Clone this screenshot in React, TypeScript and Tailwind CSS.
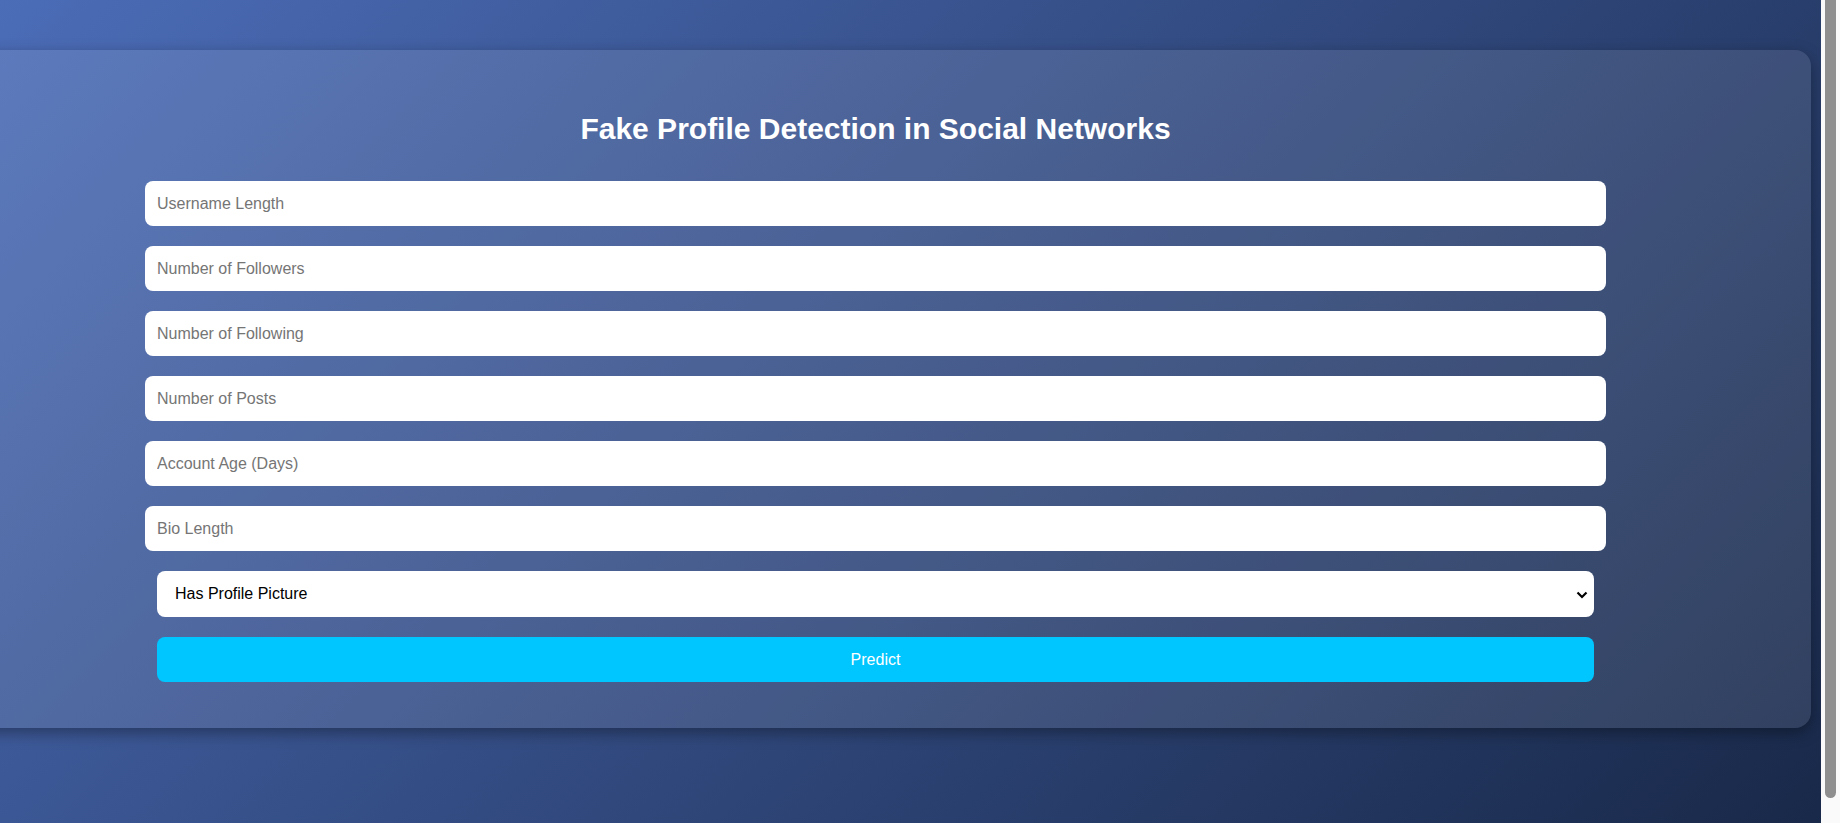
import React from "react";

const fields = [
  "Username Length",
  "Number of Followers",
  "Number of Following",
  "Number of Posts",
  "Account Age (Days)",
  "Bio Length",
];

export default function App() {
  return (
    <div className="flex h-[823px] w-full overflow-hidden font-['Liberation_Sans',Arial,sans-serif]">
      <div className="h-[849px] flex-1 overflow-hidden bg-[linear-gradient(135deg,#4b6cb7,#182848)] pt-[50px]">
        <div className="ml-[-60px] w-[1871px] rounded-[16px] bg-white/10 pt-[61px] pb-[46px] shadow-[0_5px_15px_rgba(0,0,0,0.35)]">
          <h2 className="text-center text-[30px] leading-[36px] font-bold text-white">
            Fake Profile Detection in Social Networks
          </h2>
          <form
            className="mt-[34px] flex flex-col gap-[20px] px-[205px]"
            onSubmit={(e) => e.preventDefault()}
          >
            {fields.map((f) => (
              <input
                key={f}
                type="text"
                placeholder={f}
                className="h-[45px] w-full rounded-[8px] bg-white px-[12px] text-[16px] text-black outline-none placeholder:text-[#757575]"
              />
            ))}
            <div className="relative mx-[12px]">
              <select
                defaultValue="1"
                className="h-[46px] w-full appearance-none rounded-[8px] bg-white pl-[18px] text-[16px] text-black outline-none"
              >
                <option value="1">Has Profile Picture</option>
                <option value="0">No Profile Picture</option>
              </select>
              <svg
                className="pointer-events-none absolute top-[20px] right-[6px]"
                width="12"
                height="8"
                viewBox="0 0 12 8"
              >
                <path d="M1.5 1.5 L6 6 L10.5 1.5" fill="none" stroke="#000" strokeWidth="2.2" />
              </svg>
            </div>
            <button
              type="submit"
              className="mx-[12px] h-[45px] rounded-[8px] bg-[#00c6ff] text-[16px] text-white"
            >
              Predict
            </button>
          </form>
        </div>
      </div>
      <div className="h-[823px] w-[19px] bg-[#fafafa] pl-[4px]">
        <div className="h-[798px] w-[11px] rounded-b-[6px] bg-[#8f8f8f]" />
      </div>
    </div>
  );
}
